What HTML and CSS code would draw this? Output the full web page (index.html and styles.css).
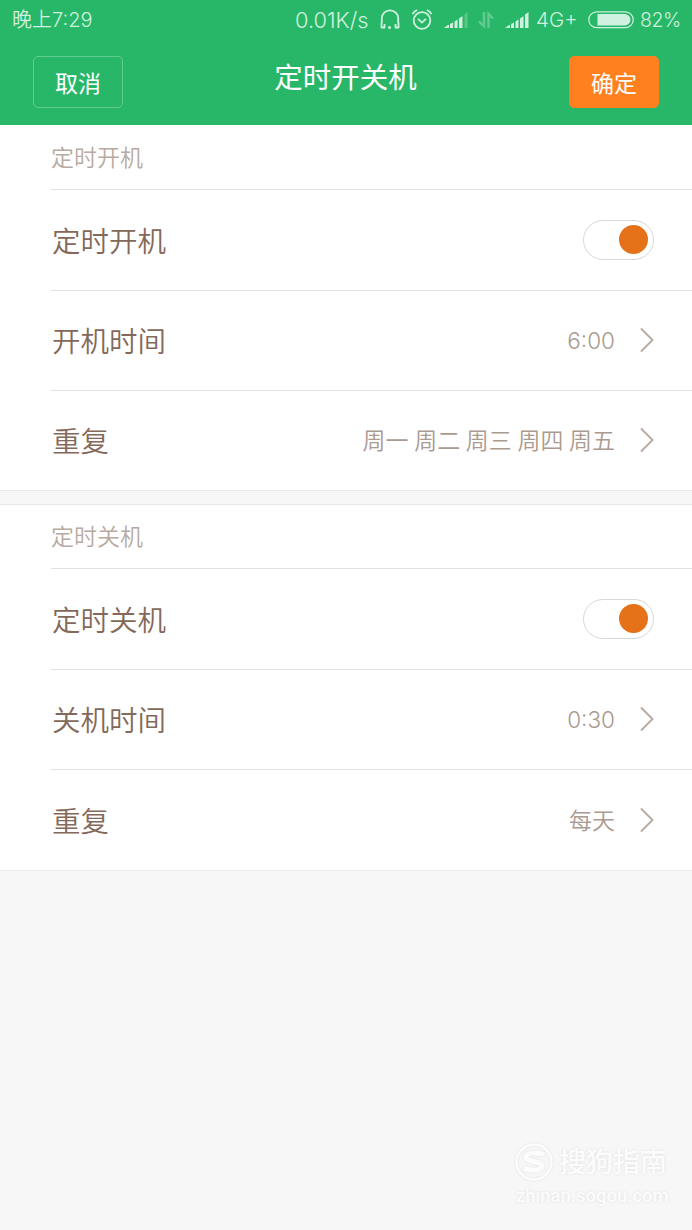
FILE: index.html
```html
<!DOCTYPE html>
<html lang="zh-CN">
<head>
  <meta charset="UTF-8">
  <meta name="viewport" content="width=device-width, initial-scale=1.0">
  <title>定时开关机</title>
  <link rel="stylesheet" href="styles.css">
</head>
<body>
  <header class="header">
    <div class="status-bar">
      <span class="clock">晚上7:29</span>
      <span class="speed">0.01K/s</span>
      <svg class="icon-headset" width="22" height="22" viewBox="0 0 22 22" fill="none" stroke="currentColor" stroke-width="1.8">
        <path d="M2.800 14V9.500a8.200 8.200 0 0 1 16.400 0V14"/>
        <path d="M2.500 13.500v5h3v-3.500M19.500 13.500v5h-3v-3.500" stroke-linejoin="round"/>
        <circle cx="10.500" cy="18.500" r="1.500" fill="currentColor" stroke="none"/>
      </svg>
      <svg class="icon-alarm" width="22" height="22" viewBox="0 0 22 22" fill="none" stroke="currentColor" stroke-width="1.8">
        <circle cx="11" cy="11.500" r="8.300"/>
        <path d="M1.500 5.200a9 9 0 0 1 4.600-4.200M20.500 5.200a9 9 0 0 0-4.600-4.200M7 9.800l4 3.800 4-3.800"/>
      </svg>
      <svg class="icon-signal" width="24" height="17" viewBox="0 0 24 17" fill="currentColor">
        <path d="M0 16l4-3h1v3zM6 12l3-1.500V16H6zM10.500 9.500l3-2V16h-3zM15 6.500l3.500-2.500v12H15z"/>
        <path d="M20.500 2.500l3-2.500v16h-3z" opacity=".3"/>
      </svg>
      <svg class="icon-data" width="16" height="18" viewBox="0 0 16 18" fill="none" stroke="currentColor" stroke-width="2.400">
        <path d="M6 1v14L1 10.500M10.500 17V3l4.500 4.500"/>
      </svg>
      <svg class="icon-signal2" width="24" height="17" viewBox="0 0 24 17" fill="currentColor">
        <path d="M0 16l4-3h1v3zM6 12l3-1.500V16H6zM10.500 9.500l3-2V16h-3zM15 6.500l3.500-2.500v12H15zM20 2.500L23.500 0v16H20z"/>
      </svg>
      <span class="network">4G+</span>
      <svg class="icon-battery" width="46" height="18" viewBox="0 0 46 18">
        <rect x=".8" y=".8" width="44.400" height="15.900" rx="7.950" fill="none" stroke="currentColor" stroke-width="1.200"/>
        <path d="M9.500 3h27.200a5.750 5.750 0 0 1 0 11.500H9.500z" fill="currentColor"/>
      </svg>
      <span class="percent">82%</span>
    </div>
    <div class="title-bar">
      <button class="btn btn-cancel">取消</button>
      <h1>定时开关机</h1>
      <button class="btn btn-ok">确定</button>
    </div>
  </header>

  <section class="group">
    <h2>定时开机</h2>
    <div class="row row-switch">
      <span class="label">定时开机</span>
      <span class="switch"></span>
    </div>
    <div class="row">
      <span class="label">开机时间</span>
      <span class="value time">6:00</span>
      <svg class="arrow" width="14" height="26" viewBox="0 0 14 26"><path d="M1 1.500L12.500 13 1 24.500"/></svg>
    </div>
    <div class="row">
      <span class="label">重复</span>
      <span class="value">周一 周二 周三 周四 周五</span>
      <svg class="arrow" width="14" height="26" viewBox="0 0 14 26"><path d="M1 1.500L12.500 13 1 24.500"/></svg>
    </div>
  </section>

  <section class="group group-off">
    <h2>定时关机</h2>
    <div class="row row-switch">
      <span class="label">定时关机</span>
      <span class="switch"></span>
    </div>
    <div class="row">
      <span class="label">关机时间</span>
      <span class="value time">0:30</span>
      <svg class="arrow" width="14" height="26" viewBox="0 0 14 26"><path d="M1 1.500L12.500 13 1 24.500"/></svg>
    </div>
    <div class="row">
      <span class="label">重复</span>
      <span class="value">每天</span>
      <svg class="arrow" width="14" height="26" viewBox="0 0 14 26"><path d="M1 1.500L12.500 13 1 24.500"/></svg>
    </div>
  </section>

  <div class="watermark">
    <div class="brand">
      <svg width="40" height="40" viewBox="0 0 40 40" fill="none" stroke="currentColor">
        <circle cx="20" cy="20" r="17.500" stroke-width="2.500"/>
        <path d="M30 12.500c-6-2-18-2.500-18 2.500 0 5.500 16 3.500 16 9 0 5-11 5-18 2" stroke-width="5"/>
      </svg>
      <span>搜狗指南</span>
    </div>
    <div class="site">zhinan.sogou.com</div>
  </div>
</body>
</html>
```
FILE: styles.css
```css
* {
  box-sizing: border-box;
}
body {
  margin: 0;
  height: 1230px;
  display: flex;
  flex-direction: column;
  background: #f7f7f7;
  font-family: Roboto, "Noto Sans CJK SC", sans-serif;
  font-weight: 350;
  overflow: hidden;
}
h1, h2 {
  margin: 0;
}
.header {
  height: 125px;
  background: #28b768;
  color: #fff;
}

/* status bar */
.status-bar {
  display: flex;
  align-items: center;
  height: 40px;
  padding-left: 12px;
  color: #d0f1df;
  font-family: Inter, "Noto Sans CJK SC", sans-serif;
  font-size: 20px;
  font-weight: 350;
  line-height: 40px;
  white-space: nowrap;
}
.status-bar svg,
.status-bar span {
  flex: none;
}
.clock {
  width: 283px;
}
.speed {
  width: 85px;
  font-size: 21.800px;
}
.icon-headset {
  margin-left: -1px;
}
.icon-alarm {
  margin-left: 10px;
}
.icon-signal {
  margin-left: 11px;
}
.icon-data {
  margin-left: 10px;
  opacity: .35;
}
.icon-signal2 {
  margin-left: 11px;
}
.network {
  width: 52px;
  margin-left: 7px;
  font-size: 20.500px;
}
.percent {
  margin-left: 6px;
  font-size: 19.500px;
  letter-spacing: -.5px;
}

/* title bar */
.title-bar {
  display: flex;
  justify-content: space-between;
  padding: 16px 33px 0;
}
.title-bar h1 {
  margin-left: -1px;
  font-size: 28.500px;
  font-weight: 400;
  line-height: 46px;
}
.btn {
  width: 90px;
  height: 52px;
  padding: 0;
  border: 1px solid #62cb91;
  border-radius: 5px;
  background: none;
  color: #fff;
  font-family: inherit;
  font-size: 23px;
  font-weight: 400;
}
.btn-ok {
  background: #ff801e;
  border-color: #ff801e;
}

/* settings list */
.group {
  padding-left: 51px;
  background: #fff;
  border-bottom: 1px solid #e9e9e9;
}
.group-off {
  margin-top: 13px;
  border-top: 1px solid #e9e9e9;
}
.group h2 {
  height: 64px;
  color: #b8aaa0;
  font-size: 23px;
  font-weight: 350;
  line-height: 67px;
}
.group-off h2 {
  height: 63px;
  line-height: 66px;
}
.row {
  display: flex;
  align-items: center;
  height: 100px;
  padding-right: 38px;
  border-top: 1px solid #e2e2e2;
}
.row-switch {
  height: 101px;
}
.group-off .row:last-child {
  height: 101px;
}
.label {
  flex: 1;
  padding-bottom: 2px;
  padding-left: 1px;
  color: #84695a;
  font-size: 28.500px;
}
.value {
  padding-bottom: 3px;
  color: #ab9a8f;
  font-size: 23px;
}
.time {
  padding-bottom: 0;
  font-family: Inter, sans-serif;
  font-size: 22.500px;
  font-weight: 300;
}
.arrow {
  margin-left: 25px;
  margin-bottom: 1px;
  fill: none;
  stroke: #b8aaa0;
  stroke-width: 1.900;
}
.switch {
  display: flex;
  align-items: center;
  justify-content: flex-end;
  width: 71px;
  height: 40px;
  margin-bottom: 1px;
  padding-right: 5px;
  border: 1px solid #d9d8d6;
  border-radius: 20px;
}
.switch::after {
  content: "";
  width: 29px;
  height: 29px;
  border-radius: 50%;
  background: #e57219;
}

/* watermark */
.watermark {
  align-self: flex-end;
  width: 178px;
  margin-top: auto;
  padding-bottom: 23px;
  color: #fcfcfc;
  font-weight: 500;
  text-shadow: 0 0 3px #e0e0e0;
}
.watermark svg {
  filter: drop-shadow(0 0 1px #e0e0e0);
}
.brand {
  display: flex;
  align-items: center;
  gap: 5px;
  height: 46px;
  font-size: 27px;
  line-height: 40px;
  white-space: nowrap;
}
.brand span {
  padding-top: 2px;
}
.site {
  padding-left: 2px;
  font-size: 18.500px;
  line-height: 22px;
}
```
